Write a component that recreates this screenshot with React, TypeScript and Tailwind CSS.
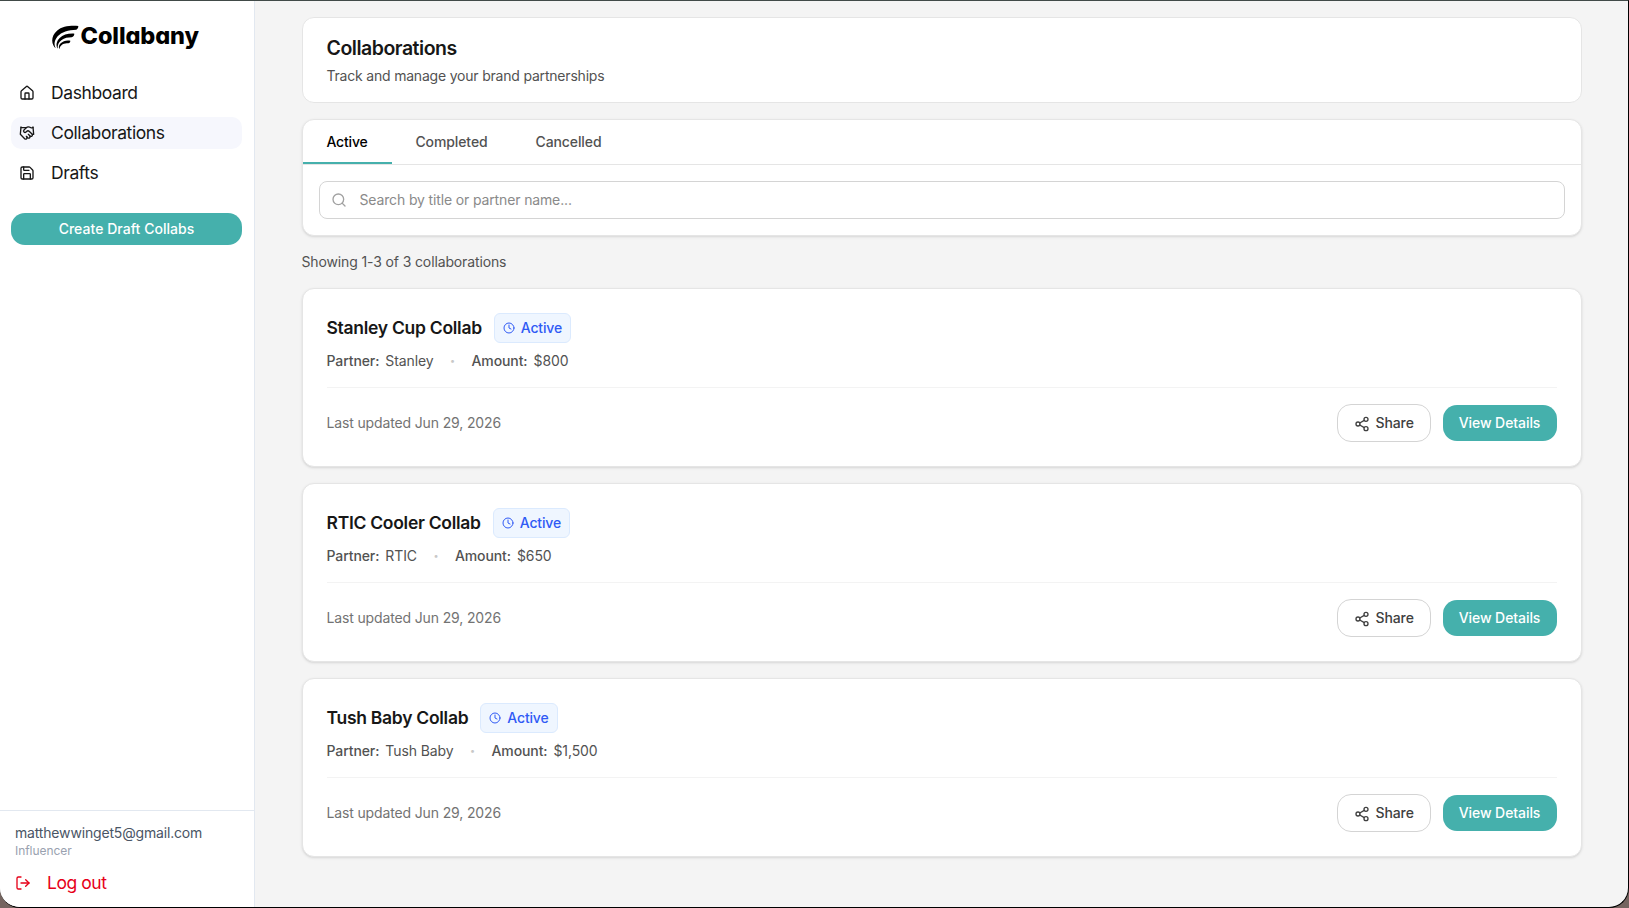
import { Clock, Handshake, House, LogOut, LucideIcon, Save, Search, Share2 } from 'lucide-react'
import clsx from 'clsx'

type Collab = {
  title: string
  partner: string
  amount: string
  updated: string
}

const collabs: Collab[] = [
  { title: 'Stanley Cup Collab', partner: 'Stanley', amount: '$800', updated: 'Jun 29, 2026' },
  { title: 'RTIC Cooler Collab', partner: 'RTIC', amount: '$650', updated: 'Jun 29, 2026' },
  { title: 'Tush Baby Collab', partner: 'Tush Baby', amount: '$1,500', updated: 'Jun 29, 2026' },
]

const navItems: { label: string; icon: LucideIcon; current?: boolean }[] = [
  { label: 'Dashboard', icon: House },
  { label: 'Collaborations', icon: Handshake, current: true },
  { label: 'Drafts', icon: Save },
]

const Logo = () => (
  <div className="flex h-[76px] items-start pt-[22px] pl-[52px]">
    <svg viewBox="21 30 81 75" className="mt-[2px] h-[25px] w-[27px]" fill="black">
      <path d="M100 33C76 31 51 34 36 47C22 59 18 77 25 91C27 95 29 98 32 100C26 88 28 76 38 64C49 51 70 45 94 44C98 42 100 38 100 33Z" />
      <path d="M88 56C70 55 54 59 44 69C34 79 32 91 38 101C37 90 41 82 50 75C58 69 69 67 80 67C85 65 88 61 88 56Z" />
      <path d="M76 77C64 75 54 78 47 85C42 90 40 96 43 103C44 96 48 91 53 88C58 85 64 85 70 85C74 84 76 81 76 77Z" />
    </svg>
    <span className="pl-[1.5px] text-[23.5px] leading-[26px] font-extrabold tracking-[-0.1px] text-black [font-feature-settings:'cv11']">
      Collabany
    </span>
  </div>
)

const Sidebar = () => (
  <aside className="flex w-[255px] shrink-0 flex-col border-r border-[#e2e8f0] bg-white">
    <Logo />
    <nav className="flex flex-col gap-2 pr-3 pl-[11px]">
      {navItems.map(({ label, icon: Icon, current }) => (
        <a
          key={label}
          className={clsx(
            'flex h-8 items-center gap-4 rounded-[10px] px-2 text-[17.5px] tracking-[-0.4px] text-[#171717]',
            current && 'bg-[#f6f7fd]',
          )}
        >
          <Icon size={16} />
          {label}
        </a>
      ))}
    </nav>
    <div className="mt-6 pr-3 pl-[11px]">
      <button className="h-8 w-full rounded-[14px] bg-[#45b0ac] text-sm font-medium tracking-[0.04px] text-white">
        Create Draft Collabs
      </button>
    </div>
    <div className="mt-auto h-[97px] border-t border-[#e2e8f0] px-[15px] pt-3">
      <p className="text-sm tracking-[-0.17px] text-[#4a5565]">matthewwinget5@gmail.com</p>
      <p className="text-xs tracking-[-0.05px] text-[#99a1af]">Influencer</p>
      <button className="mt-2.5 flex h-7 items-center gap-4 text-[17.5px] tracking-[-0.45px] text-[#e60018]">
        <LogOut size={16} />
        Log out
      </button>
    </div>
  </aside>
)

const CollabCard = ({ collab }: { collab: Collab }) => (
  <div className="rounded-xl border border-[#e5e5e5] bg-white p-6 shadow-sm">
    <div className="flex items-center gap-3">
      <h3 className="text-[17.5px] font-semibold tracking-[-0.28px] text-[#171717]">{collab.title}</h3>
      <span className="flex h-[30px] items-center gap-1.5 rounded-md border border-[#dbeafe] bg-[#eff6ff] px-2 text-sm font-medium tracking-[-0.16px] text-[#2f5af5]">
        <Clock size={12} />
        Active
      </span>
    </div>
    <div className="mt-2 flex items-center gap-4 text-sm tracking-[-0.1px] text-[#525252]">
      <span className="flex gap-1.5">
        <span className="font-medium">Partner:</span>
        {collab.partner}
      </span>
      <span className="flex w-[6px] justify-center text-[9px] text-[#c8c8c8]">•</span>
      <span className="flex gap-1.5">
        <span className="font-medium">Amount:</span>
        {collab.amount}
      </span>
    </div>
    <div className="mt-4 flex items-center justify-between border-t border-[#f3f3f3] pt-4">
      <span className="text-sm tracking-[-0.14px] text-[#737373]">Last updated {collab.updated}</span>
      <div className="flex items-center gap-3">
        <button className="flex h-[38px] w-[94px] items-center gap-1.5 rounded-[14px] border border-[#d4d4d4] px-4 text-sm font-medium tracking-[-0.1px] text-[#404040]">
          <Share2 size={16} className="mt-px shrink-0" />
          Share
        </button>
        <button className="h-9 w-[114px] rounded-[14px] bg-[#45b0ac] text-sm font-medium tracking-[-0.07px] text-white">
          View Details
        </button>
      </div>
    </div>
  </div>
)

export default function App() {
  return (
    <div className="h-[908px] w-[1629px] overflow-hidden bg-[#74645f] font-[Inter,sans-serif] antialiased">
      <div className="flex h-full overflow-hidden rounded-b-[20px] border-t border-r border-b border-black border-t-[#414a48] bg-[#f4f4f4]">
        <Sidebar />
        <main className="flex grow flex-col px-[46.5px] pt-4">
          <div className="h-[86px] rounded-xl border border-[#e5e5e5] bg-white px-6 pt-4">
            <h1 className="text-[19.5px] leading-7 font-semibold tracking-[-0.48px] text-[#171717]">Collaborations</h1>
            <p className="mt-1 text-sm tracking-[-0.2px] text-[#525252]">Track and manage your brand partnerships</p>
          </div>

          <div className="mt-4 overflow-hidden rounded-xl border border-[#e5e5e5] bg-white shadow-sm">
            <div className="flex h-[45px] border-b border-[#e5e5e5] text-sm font-medium text-[#525252]">
              <button className="w-[89px] border-b-2 border-[#45b0ac] pt-[2px] tracking-[-0.16px] text-black">Active</button>
              <button className="w-[120px] border-b-2 border-transparent pt-[2px] tracking-[-0.1px]">Completed</button>
              <button className="w-[114px] border-b-2 border-transparent pt-[2px] tracking-[-0.1px]">Cancelled</button>
            </div>
            <div className="p-4">
              <div className="flex h-[38px] items-center gap-[13px] rounded-lg border border-[#d4d4d4] pl-[11px]">
                <Search size={16} className="text-[#a1a1a1]" />
                <input
                  className="grow text-sm tracking-[-0.14px] outline-none placeholder:text-[#8a8a8a]"
                  placeholder="Search by title or partner name..."
                />
              </div>
            </div>
          </div>

          <p className="mt-4 text-sm tracking-[-0.13px] text-[#525252]">Showing 1-3 of 3 collaborations</p>

          <div className="mt-4 flex flex-col gap-4">
            {collabs.map((collab) => (
              <CollabCard key={collab.title} collab={collab} />
            ))}
          </div>
        </main>
      </div>
    </div>
  )
}
